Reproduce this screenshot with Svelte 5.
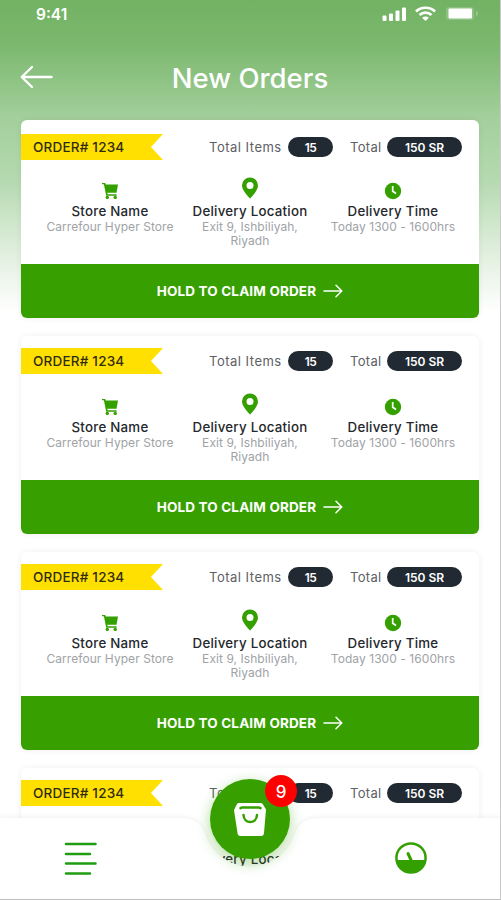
<script>
	const orders = [1, 2, 3, 4].map((id) => ({
		id,
		number: '1234',
		items: 15,
		total: '150 SR',
		store: 'Carrefour Hyper Store',
		location: 'Exit 9, Ishbiliyah, Riyadh',
		time: 'Today 1300 - 1600hrs'
	}));
	let pending = 9;
</script>

<div class="screen">
	<div class="status">
		<span class="clock">9:41</span>
		<svg class="status-icons" width="98" height="18" viewBox="0 0 98 18" fill="#fff">
			<rect x="1.500" y="9.500" width="4" height="5.500" rx="1" />
			<rect x="8" y="7.500" width="4" height="7.500" rx="1" />
			<rect x="14.500" y="4.500" width="4" height="10.500" rx="1" />
			<rect x="21" y="1.500" width="4" height="13.500" rx="1" />
			<g fill="none" stroke="#fff" stroke-width="2.600">
				<path d="M35 5.500c5-5 14-5 19 0" />
				<path d="M38.500 9c3.300-3.200 8.700-3.200 12 0" />
			</g>
			<path d="M41.100 11.700c2-1.700 4.800-1.700 6.800 0l-3.400 3.300z" />
			<rect x="65" y="1" width="28" height="13" rx="3" opacity=".18" />
			<rect x="67.500" y="2.500" width="23.500" height="10" rx="1" />
			<path d="M95 5v5c1.500-.5 2-1.500 2-2.500S96.500 5.500 95 5z" opacity=".25" />
		</svg>
	</div>

	<header>
		<svg class="back" width="34" height="24" viewBox="0 0 34 24">
			<path d="M12 2 1.700 12 12 22M2 12h29.500" />
		</svg>
		<h1>New Orders</h1>
	</header>

	<main>
		{#each orders as order (order.id)}
			<article class="card">
				<div class="top">
					<div class="ribbon"><span>ORDER# {order.number}</span></div>
					<span class="label items">Total Items</span>
					<span class="pill small">{order.items}</span>
					<span class="label total">Total</span>
					<span class="pill">{order.total}</span>
				</div>
				<div class="details">
					<div class="col store">
						<svg width="18" height="18" viewBox="0 0 18 18">
							<path d="M1 1h3.200l.5 1.500H17l-1.500 8.300H6.300l.3 1.400h9v1.500H5.200L2.900 2.300H1z" />
							<circle cx="6.300" cy="15.400" r="1.700" />
							<circle cx="14.200" cy="15.400" r="1.700" />
						</svg>
						<h2>Store Name</h2>
						<p>{order.store}</p>
					</div>
					<div class="col location">
						<svg width="18" height="22" viewBox="0 0 18 22">
							<path fill-rule="evenodd" d="M9 .5a8 8 0 0 0-8 8C1 14 9 21.500 9 21.500S17 14 17 8.500a8 8 0 0 0-8-8zm0 4.600a3.500 3.500 0 1 1 0 7 3.500 3.500 0 0 1 0-7z" />
						</svg>
						<h2>Delivery Location</h2>
						<p>{order.location}</p>
					</div>
					<div class="col time">
						<svg width="18" height="18" viewBox="0 0 18 18">
							<circle cx="9" cy="9" r="8.200" />
							<path d="M8.700 4v5.200l3.300 2.300" fill="none" stroke="#fff" stroke-width="1.700" />
						</svg>
						<h2>Delivery Time</h2>
						<p>{order.time}</p>
					</div>
				</div>
				<button class="claim">
					<span>HOLD TO CLAIM ORDER</span>
					<svg width="20" height="14" viewBox="0 0 20 14">
						<path d="M1 7h17.500M13 1.300 18.800 7 13 12.700" />
					</svg>
				</button>
			</article>
		{/each}
	</main>

	<nav>
		<svg class="nav-shape" width="501" height="100" viewBox="0 0 501 100">
			<path d="M0 18H180C195 18 202 23 206 36A47 47 0 0 0 294 36C298 23 305 18 320 18H501V100H0Z" />
		</svg>
		<svg class="menu" width="34" height="36" viewBox="0 0 34 36">
			<path d="M2 3h29.500M2 13h24M2 22.500h29.500M2 32.500h24" />
		</svg>
		<svg class="gauge" width="34" height="34" viewBox="0 0 34 34">
			<circle cx="17" cy="17" r="14.600" />
			<path class="fill" d="M2.500 19h29a14.600 14.600 0 0 1-29 0z" />
			<path class="needle" d="M14 12.500 17 19" />
		</svg>
		<button class="bag">
			<svg width="34" height="35" viewBox="0 0 34 35">
				<path class="body" d="M6 1h21.500q1.500 0 2.200 1L33 7.500 31 31q-.2 3-3 3H7.500q-2.800 0-3-3L1 8 4 2q.7-1 2-1z" />
				<path class="line" d="M7.500 6.200 9 5.400h17l1.500.8M10.500 13c.5 9.300 13 9.300 13.500 0" />
			</svg>
			<span class="badge">{pending}</span>
		</button>
	</nav>
</div>

<style>
	:global(body) {
		margin: 0;
	}

	.screen {
		position: relative;
		box-sizing: border-box;
		width: 501px;
		height: 900px;
		overflow: hidden;
		border-right: 1px solid #c9c9c9;
		border-bottom: 1px solid #bdbdbd;
		background: linear-gradient(#72b263 0, #7cb86e 45px, #a4d09d 120px, #b5d9b0 180px, #dcedd9 245px, #fff 312px);
		font-family: Inter, 'Liberation Sans', sans-serif;
	}

	.status {
		display: flex;
		justify-content: space-between;
		height: 34px;
		padding: 5px 21px 0 36px;
		box-sizing: border-box;
	}

	.clock {
		color: #fff;
		font-size: 15.5px;
		font-weight: 600;
		line-height: 19px;
	}

	header {
		display: grid;
		grid-template-columns: 34px 1fr 34px;
		align-items: center;
		height: 86px;
		padding: 0 20px;
	}

	.back,
	.claim svg {
		fill: none;
		stroke: #fff;
		stroke-width: 2.4;
		stroke-linecap: round;
		stroke-linejoin: round;
	}

	h1 {
		margin: 1px 0 0;
		color: #fff;
		font-size: 27.5px;
		font-weight: 500;
		line-height: 34px;
		letter-spacing: 0;
		text-align: center;
		white-space: nowrap;
	}

	main {
		display: flex;
		flex-direction: column;
		gap: 18px;
		padding: 0 21px;
	}

	.card {
		flex: none;
		width: 458px;
		height: 198px;
		overflow: hidden;
		border-radius: 6px;
		background: #fff;
		box-shadow: 0 0 6px rgba(0, 0, 0, 0.07);
	}

	.top {
		display: flex;
		align-items: center;
		height: 26px;
		padding: 14px 17px 0 0;
	}

	.card + .card .top {
		padding-top: 12px;
		padding-bottom: 2px;
	}

	.ribbon {
		width: 142px;
		height: 26px;
		background: #ffe000;
		clip-path: polygon(0 0, 100% 0, 130px 50%, 100% 100%, 0 100%);
	}

	.ribbon span {
		display: block;
		padding-left: 12px;
		color: #302c10;
		font-size: 13.5px;
		font-weight: 500;
		line-height: 27px;
		letter-spacing: 0.2px;
	}

	.label {
		color: #5d6065;
		font-size: 13px;
		line-height: 20px;
		white-space: nowrap;
	}

	.items {
		width: 79px;
		margin-left: 46px;
		letter-spacing: 0.5px;
	}

	.total {
		width: 37px;
		margin-left: 17px;
		letter-spacing: 0.3px;
	}

	.pill {
		width: 75px;
		height: 20px;
		border-radius: 10px;
		background: #212a33;
		color: #fff;
		font-size: 12px;
		font-weight: 600;
		line-height: 22px;
		text-align: center;
	}

	.small {
		width: 45px;
		letter-spacing: -0.5px;
	}

	.details {
		display: flex;
		height: 104px;
	}

	.col {
		display: flex;
		flex-direction: column;
		align-items: center;
		text-align: center;
	}

	.store {
		width: 154px;
		margin-left: 12px;
	}

	.location {
		width: 126px;
	}

	.time {
		width: 160px;
	}

	.col svg {
		flex: none;
		margin-top: 22px;
		fill: #34a000;
	}

	.location svg {
		margin-top: 17px;
	}

	h2 {
		margin: 3px 0 1px;
		color: #24272b;
		font-size: 13.3px;
		font-weight: 500;
		line-height: 16px;
		letter-spacing: 0.25px;
		white-space: nowrap;
	}

	.location h2 {
		margin-top: 4px;
	}

	.col p {
		width: 132px;
		margin: 0;
		color: #a0a3a6;
		font-size: 12px;
		line-height: 14px;
		letter-spacing: 0.06px;
	}

	.location p {
		width: 110px;
	}

	.claim {
		display: flex;
		align-items: center;
		justify-content: center;
		gap: 7px;
		width: 100%;
		height: 54px;
		padding: 0;
		border: 0;
		background: #37a000;
		color: #fff;
		font: 700 13.5px Inter, 'Liberation Sans', sans-serif;
		letter-spacing: 0.15px;
	}

	.claim svg {
		stroke-width: 1.5;
	}

	/* bottom bar lies over the scrolling list */
	nav {
		position: absolute;
		left: 0;
		bottom: 0;
		display: grid;
		grid-template-columns: 162px 1fr 178px;
		justify-items: center;
		width: 500px;
		height: 99px;
	}

	.nav-shape {
		position: absolute;
		left: 0;
		top: 0;
		fill: #fff;
		filter: drop-shadow(0 -1px 2px rgba(0, 0, 0, 0.06));
	}

	.status-icons {
		margin-top: 1px;
	}

	.menu,
	.gauge {
		position: relative;
		margin-top: 40.5px;
		fill: none;
		stroke: #1f9c12;
		stroke-width: 2.5;
		stroke-linecap: round;
	}

	.gauge {
		grid-column: 3;
		margin-top: 41px;
		stroke: #34a000;
	}

	.gauge .fill {
		fill: #34a000;
		stroke: none;
	}

	.gauge .needle {
		stroke-width: 3;
	}

	.bag {
		position: absolute;
		left: 210px;
		top: -21px;
		display: flex;
		align-items: center;
		justify-content: center;
		width: 80px;
		height: 80px;
		padding: 0;
		border: 0;
		border-radius: 50%;
		background: #37a000;
		box-shadow: 0 4px 14px rgba(55, 160, 0, 0.4);
	}

	.bag .body {
		fill: #fff;
	}

	.bag .line {
		fill: none;
		stroke: #37a000;
		stroke-width: 2.5;
		stroke-linecap: round;
	}

	.badge {
		position: absolute;
		left: 55px;
		top: -4px;
		width: 32px;
		height: 32px;
		border-radius: 50%;
		background: #fe0000;
		color: #fff;
		font: 500 17px/34px Inter, 'Liberation Sans', sans-serif;
	}
</style>
